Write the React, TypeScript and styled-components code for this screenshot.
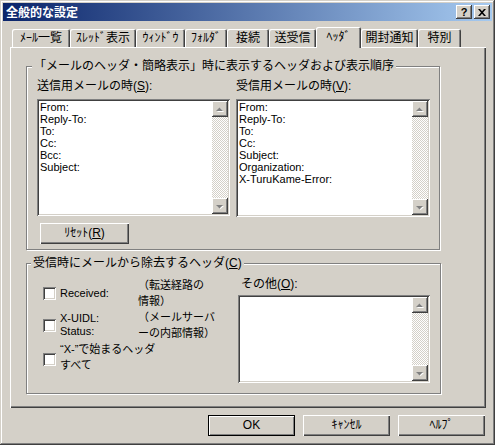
import React from 'react'
import styled, { createGlobalStyle } from 'styled-components'

const FACE = '#D4D0C8'
const SHADOW = '#808080'
const DARK = '#404040'
const FONT = `"Liberation Sans", "Noto Sans CJK JP", sans-serif`

const GlobalStyle = createGlobalStyle`
  html, body {
    margin: 0;
    padding: 0;
    background: ${FACE};
  }
  body {
    font-family: ${FONT};
    font-size: 12px;
    color: #000;
  }
`

const Window = styled.div`
  width: 495px;
  height: 445px;
  box-sizing: border-box;
  padding: 3px;
  background: ${FACE};
  box-shadow: inset -1px -1px ${DARK}, inset 1px 1px ${FACE}, inset -2px -2px ${SHADOW}, inset 2px 2px #fff;
  display: flex;
  flex-direction: column;
`

const TitleBar = styled.div`
  height: 18px;
  display: flex;
  align-items: center;
  padding: 0 2px 0 3px;
  background: linear-gradient(to right, #0a246a, #a6caf0);
`

const TitleText = styled.div`
  flex: 1;
  color: #fff;
  font-weight: bold;
  font-size: 12px;
  line-height: 18px;
  font-family: "Noto Sans CJK JP", sans-serif;
`

const CaptionButtons = styled.div`
  display: flex;
  gap: 2px;
`

const CaptionButton = styled.div`
  width: 16px;
  height: 14px;
  box-sizing: border-box;
  background: ${FACE};
  box-shadow: inset -1px -1px ${DARK}, inset 1px 1px #fff, inset -2px -2px ${SHADOW};
  display: flex;
  align-items: center;
  justify-content: center;
  font: bold 11px/14px "Liberation Sans", sans-serif;
`

const Content = styled.div`
  flex: 1;
  display: flex;
  flex-direction: column;
  padding: 6px 0 0 7px;
`

const TabRow = styled.div`
  height: 20px;
  display: flex;
  align-items: flex-end;
  padding-left: 2px;
  position: relative;
  z-index: 1;
`

const Tab = styled.div<{ $active?: boolean; $w: number }>`
  width: ${p => p.$w}px;
  height: ${p => (p.$active ? 21 : 18)}px;
  margin-bottom: ${p => (p.$active ? -1 : 0)}px;
  box-sizing: border-box;
  padding-top: ${p => (p.$active ? 1 : 0)}px;
  background: ${FACE};
  border-radius: 2px 2px 0 0;
  box-shadow: inset 1px 1px #fff, inset -1px 0 ${DARK}, inset -2px 0 ${SHADOW};
  text-align: center;
  line-height: 18px;
  white-space: nowrap;
`

const Panel = styled.div`
  width: 476px;
  height: 361px;
  box-sizing: border-box;
  padding: 12px 0 0 16px;
  box-shadow: inset 1px 1px #fff, inset -1px -1px ${DARK}, inset -2px -2px ${SHADOW};
  display: flex;
  flex-direction: column;
`

const GroupBox = styled.fieldset<{ $w: number }>`
  margin: 0;
  min-width: 0;
  width: ${p => p.$w}px;
  box-sizing: border-box;
  border: 1px solid ${SHADOW};
  box-shadow: inset 1px 1px #fff, 1px 1px #fff;
`

const FirstGroup = styled(GroupBox)`
  padding: 6px 9px 5px 10px;
`

const SecondGroup = styled(GroupBox)`
  margin-top: 6px;
  padding: 7px 10px 10px 16px;
  display: flex;
  gap: 8px;
`

const Legend = styled.legend<{ $shift: number }>`
  padding: 0 2px;
  margin-left: ${p => p.$shift}px;
  line-height: 14px;
  background: ${FACE};
  white-space: nowrap;
`

const Columns = styled.div`
  display: flex;
  gap: 6px;
`

const Column = styled.div<{ $w: number }>`
  width: ${p => p.$w}px;
  display: flex;
  flex-direction: column;
`

const FieldLabel = styled.div<{ $indent?: number }>`
  line-height: 14px;
  height: 14px;
  padding-left: ${p => p.$indent || 0}px;
  white-space: nowrap;
`

const ListBox = styled.div<{ $h: number; $mt: number }>`
  height: ${p => p.$h}px;
  margin-top: ${p => p.$mt}px;
  box-sizing: border-box;
  padding: 2px;
  background: #fff;
  box-shadow: inset 1px 1px ${SHADOW}, inset -1px -1px #fff, inset 2px 2px ${DARK}, inset -2px -2px ${FACE};
  display: flex;
`

const ListItems = styled.div`
  flex: 1;
  padding-left: 1px;
  overflow: hidden;
  font-family: "Liberation Sans", sans-serif;
  font-size: 11px;
  line-height: 12px;
`

const ScrollBar = styled.div`
  width: 16px;
  display: flex;
  flex-direction: column;
`

const ScrollTrack = styled.div`
  flex: 1;
  background: repeating-conic-gradient(${FACE} 0 25%, #fff 0 50%) 0 0 / 2px 2px;
`

const ArrowButton = styled.div`
  width: 16px;
  height: 16px;
  box-sizing: border-box;
  background: ${FACE};
  box-shadow: inset -1px -1px ${DARK}, inset 1px 1px #fff, inset -2px -2px ${SHADOW};
  display: flex;
  align-items: center;
  justify-content: center;
`

const Button = styled.div<{ $default?: boolean; $w: number }>`
  width: ${p => p.$w}px;
  height: 21px;
  box-sizing: border-box;
  background: ${FACE};
  box-shadow: ${p =>
    p.$default
      ? `inset 0 0 0 1px #000, inset 2px 2px #fff, inset -2px -2px ${SHADOW}`
      : `inset 1px 1px #fff, inset -1px -1px ${DARK}, inset -2px -2px ${SHADOW}`};
  display: flex;
  align-items: center;
  justify-content: center;
  line-height: 21px;
  white-space: nowrap;
`

const ResetButton = styled(Button)`
  margin: 7px 0 0 3px;
`

const ButtonRow = styled.div`
  margin-top: 7px;
  padding-right: 7px;
  display: flex;
  justify-content: flex-end;
  gap: 8px;
`

const CheckColumn = styled.div`
  width: 187px;
  display: flex;
  flex-direction: column;
`

const CheckRow = styled.div`
  height: 32px;
  display: flex;
  align-items: center;
`

const CheckBox = styled.div<{ $drop?: number }>`
  width: 13px;
  height: 13px;
  flex-shrink: 0;
  box-sizing: border-box;
  margin: ${p => p.$drop || 0}px 4px 0 0;
  background: #fff;
  box-shadow: inset 1px 1px ${SHADOW}, inset -1px -1px #fff, inset 2px 2px ${DARK}, inset -2px -2px ${FACE};
`

const CheckLabel = styled.div<{ $w?: number; $latin?: boolean }>`
  width: ${p => (p.$w ? `${p.$w}px` : 'auto')};
  flex-shrink: 0;
  font-size: 11px;
  line-height: ${p => (p.$latin ? 13 : 16)}px;
  white-space: nowrap;
`

const Note = styled.div`
  font-size: 11px;
  line-height: 16px;
  white-space: nowrap;
`

const OtherColumn = styled.div`
  width: 192px;
  display: flex;
  flex-direction: column;
`

const Key = styled.span`
  text-decoration: underline;
  text-underline-offset: 1px;
`

const Arrow = ({ down }: { down?: boolean }) => (
  <svg width="8" height="5" viewBox="0 0 8 5">
    <g transform={down ? 'rotate(180 4 2.5)' : undefined}>
      <polygon points={down ? '0,3 7,3 3.5,0' : '1,5 8,5 4.5,1'} fill="#fff" />
      <polygon points={down ? '1,4 8,4 4.5,0.5' : '0,4 7,4 3.5,0.5'} fill={SHADOW} />
    </g>
  </svg>
)

const CloseGlyph = () => (
  <svg width="8" height="7" viewBox="0 0 8 7">
    <path d="M0 0h2l2 2.2L6 0h2L5 3.5 8 7H6L4 4.8 2 7H0l3-3.5z" fill="#000" />
  </svg>
)

const List = ({ h, mt, items }: { h: number; mt: number; items: string[] }) => (
  <ListBox $h={h} $mt={mt}>
    <ListItems>
      {items.map(i => (
        <div key={i}>{i}</div>
      ))}
    </ListItems>
    <ScrollBar>
      <ArrowButton>
        <Arrow />
      </ArrowButton>
      <ScrollTrack />
      <ArrowButton>
        <Arrow down />
      </ArrowButton>
    </ScrollBar>
  </ListBox>
)

const tabs: [string, number][] = [
  ['ﾒｰﾙ一覧', 58],
  ['ｽﾚｯﾄﾞ表示', 66],
  ['ｳｨﾝﾄﾞｳ', 49],
  ['ﾌｫﾙﾀﾞ', 42],
  ['接続', 42],
  ['送受信', 47],
  ['ﾍｯﾀﾞ', 45],
  ['開封通知', 57],
  ['特別', 43],
]

const sendHeaders = ['From:', 'Reply-To:', 'To:', 'Cc:', 'Bcc:', 'Subject:']
const recvHeaders = ['From:', 'Reply-To:', 'To:', 'Cc:', 'Subject:', 'Organization:', 'X-TuruKame-Error:']

export default function App() {
  return (
    <>
      <GlobalStyle />
      <Window>
        <TitleBar>
          <TitleText>全般的な設定</TitleText>
          <CaptionButtons>
            <CaptionButton>?</CaptionButton>
            <CaptionButton>
              <CloseGlyph />
            </CaptionButton>
          </CaptionButtons>
        </TitleBar>
        <Content>
          <TabRow>
            {tabs.map(([label, w]) => (
              <Tab key={label} $w={w} $active={label === 'ﾍｯﾀﾞ'}>
                {label}
              </Tab>
            ))}
          </TabRow>
          <Panel>
            <FirstGroup $w={414}>
              <Legend $shift={-5}>「メールのヘッダ・簡略表示」時に表示するヘッダおよび表示順序</Legend>
              <Columns>
                <Column $w={193}>
                  <FieldLabel>
                    送信用メールの時(<Key>S</Key>):
                  </FieldLabel>
                  <List h={117} mt={6} items={sendHeaders} />
                  <ResetButton $w={89}>
                    ﾘｾｯﾄ(<Key>R</Key>)
                  </ResetButton>
                </Column>
                <Column $w={194}>
                  <FieldLabel>
                    受信用メールの時(<Key>V</Key>):
                  </FieldLabel>
                  <List h={118} mt={6} items={recvHeaders} />
                </Column>
              </Columns>
            </FirstGroup>
            <SecondGroup $w={415}>
              <Legend $shift={-12}>
                受信時にメールから除去するヘッダ(<Key>C</Key>)
              </Legend>
              <CheckColumn>
                <CheckRow>
                  <CheckBox />
                  <CheckLabel $w={78} $latin>
                    Received:
                  </CheckLabel>
                  <Note>
                    （転送経路の
                    <br />
                    情報）
                  </Note>
                </CheckRow>
                <CheckRow>
                  <CheckBox />
                  <CheckLabel $w={78} $latin>
                    X-UIDL:
                    <br />
                    Status:
                  </CheckLabel>
                  <Note>
                    （メールサーバ
                    <br />
                    ーの内部情報）
                  </Note>
                </CheckRow>
                <CheckRow>
                  <CheckBox $drop={5} />
                  <CheckLabel>
                    “X-”で始まるヘッダ
                    <br />
                    すべて
                  </CheckLabel>
                </CheckRow>
              </CheckColumn>
              <OtherColumn>
                <FieldLabel $indent={3}>
                  その他(<Key>O</Key>):
                </FieldLabel>
                <List h={88} mt={4} items={[]} />
              </OtherColumn>
            </SecondGroup>
          </Panel>
          <ButtonRow>
            <Button $w={87} $default>
              OK
            </Button>
            <Button $w={87}>ｷｬﾝｾﾙ</Button>
            <Button $w={87}>ﾍﾙﾌﾟ</Button>
          </ButtonRow>
        </Content>
      </Window>
    </>
  )
}
